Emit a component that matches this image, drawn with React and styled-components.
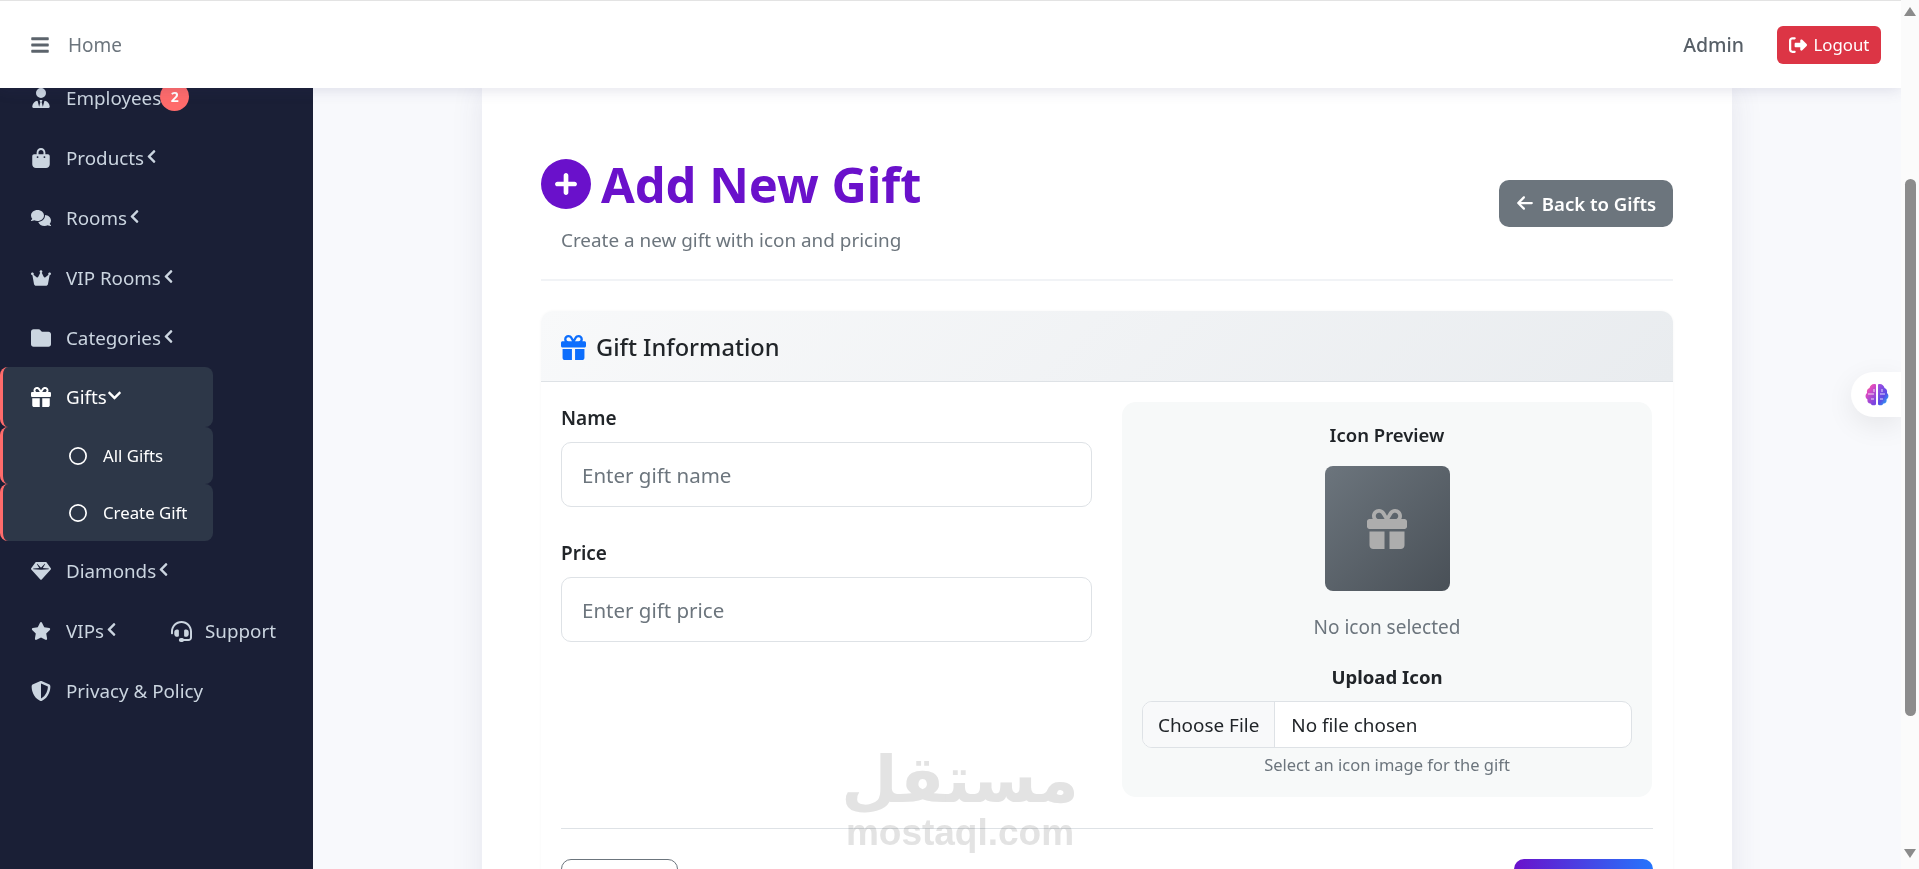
import React from "react";
import styled, { createGlobalStyle } from "styled-components";
import {
  FaUserTie, FaBagShopping, FaComments, FaCrown, FaFolder, FaGift, FaRegCircle,
  FaGem, FaStar, FaHeadset, FaShieldHalved, FaRightFromBracket,
  FaCirclePlus, FaArrowLeft,
} from "react-icons/fa6";
import { FaBars, FaChevronLeft, FaChevronDown } from "react-icons/fa";

const Global = createGlobalStyle`
  html, body { margin: 0; height: 869px; overflow: hidden; background: #f8f9fc; }
  * { box-sizing: border-box; }
  body, input, button { font-family: "Noto Sans", "Open Sans", sans-serif; }
`;

const Page = styled.div`display: flex; height: 869px; position: relative; overflow: hidden;`;
const Main = styled.div`flex: 1; min-width: 0; display: flex; flex-direction: column;`;

const Topbar = styled.header`
  height: 88px; flex: none; display: flex; align-items: center; background: #fff;
  border-top: 1px solid #e3e3e3; padding: 0 20px 0 30px;
  box-shadow: 0 2px 14px rgba(58, 59, 110, 0.14); position: relative; z-index: 3; color: #5c646c;
`;
const Home = styled.span`margin-left: 18px; font-size: 19px; color: #6c757d; flex: 1;`;
const Admin = styled.span`font-size: 19.5px; font-weight: 500; color: #575f67; margin-right: 33px;`;
const LogoutButton = styled.button`
  width: 104px; height: 38px; border: 0; border-radius: 6px; background: #dc3545; color: #fff; font-size: 16.8px;
  display: flex; align-items: center; justify-content: center; gap: 7px; padding: 0;
`;

const Body = styled.div`flex: 1; min-height: 0; display: flex; overflow: hidden;`;
const Sidebar = styled.nav`width: 313px; flex: none; background: #1a1f36; overflow: hidden; position: relative; z-index: 1;`;
const NavList = styled.div`margin-top: -20px; display: flex; flex-direction: column;`;
const NavRow = styled.div`
  width: ${p => (p.$active ? "213px" : "100%")};
  height: 60px; display: flex; align-items: center; padding-left: ${p => (p.$active ? "27px" : "30px")};
  margin-top: ${p => (p.$active ? "-1px" : "0")};
  color: ${p => (p.$active ? "#fff" : "#cbd5e0")}; font-size: 18.8px;
  background: ${p => (p.$active ? "#2d3748" : "transparent")};
  border-left: ${p => (p.$active ? "3px solid #ff6b6b" : "0")};
  border-radius: ${p => (p.$active ? "8px" : "0")};
`;
const IconSlot = styled.span`width: 21px; margin-right: 15px; display: flex; justify-content: center; font-size: 20px; flex: none;`;
const Caret = styled.span`display: flex; font-size: 15px; margin-top: -3px;`;
const Badge = styled.span`
  width: 29px; height: 29px; border-radius: 50%; background: #ff6b6b; color: #fff; font-size: 14px; font-weight: 700;
  display: flex; align-items: center; justify-content: center; margin-top: -3px; margin-left: -1px;
`;
const SubRow = styled.div`
  width: 213px; height: 57px; display: flex; align-items: center; padding-left: 66px; color: #fff; font-size: 16.8px;
  background: #2d3748; border-left: 3px solid #ff6b6b; border-radius: 8px;
  svg { font-size: 18px; margin-right: 16px; }
`;
const SupportItem = styled.span`
  display: flex; align-items: center; gap: 13px; position: absolute; left: 171px; color: #cbd5e0; font-size: 18.8px;
  svg { font-size: 21px; }
`;
const VipRow = styled(NavRow)`position: relative;`;

const Content = styled.main`flex: 1; min-width: 0; background: #f8f9fc; display: flex; justify-content: center;`;
const Card = styled.section`
  width: 1250px; height: 900px; flex: none; background: #fff; padding: 70px 59px 0;
  box-shadow: 0 0 30px rgba(58, 59, 110, 0.1);
`;
const PageHead = styled.div`
  display: flex; justify-content: space-between; align-items: center; height: 123px;
  border-bottom: 2px solid #f1f3f6; padding-bottom: 26px;
`;
const TitleBlock = styled.div`display: flex; flex-direction: column;`;
const Title = styled.h1`
  margin: 0; display: flex; align-items: center; gap: 10px; font-size: 48.8px; line-height: 50px; font-weight: 700; color: #6a11cb;
  svg { font-size: 50px; }
`;
const Subtitle = styled.p`margin: 19px 0 0 20px; font-size: 18.9px; line-height: 24px; color: #6c757d;`;
const BackButton = styled.button`
  width: 174px; height: 47px; border: 0; border-radius: 10px; background: #6c757d; color: #fff;
  font-size: 18.6px; font-weight: 600; display: flex; align-items: center; justify-content: center; gap: 8px; padding: 0; margin-top: -5px;
  svg { font-size: 18px; }
`;

const FormCard = styled.div`margin-top: 30px; border-radius: 12px; background: #fff; box-shadow: 0 0 3px rgba(0,0,0,0.04);`;
const FormHead = styled.div`
  height: 71px; display: flex; align-items: center; gap: 10px; padding: 2px 20px 0; border-radius: 12px 12px 0 0;
  background: linear-gradient(135deg, #f8f9fa, #e9ecef); border-bottom: 1px solid #dee2e6;
  font-size: 23.6px; font-weight: 500; color: #212529;
  svg { font-size: 25px; color: #0d6efd; }
`;
const FormBody = styled.div`padding: 20px 20px 0;`;
const Columns = styled.div`display: grid; grid-template-columns: 531px 530px; gap: 30px;`;
const FieldColumn = styled.div`padding-top: 4px;`;
const Field = styled.div`margin-bottom: 34px;`;
const Label = styled.label`display: block; font-size: 19px; font-weight: 600; line-height: 24px; color: #212529; margin-bottom: 12px;`;
const TextInput = styled.input`
  width: 100%; height: 65px; border: 1px solid #dee2e6; border-radius: 10px; padding: 0 20px; font-size: 20.5px; color: #212529; background: #fff;
  &::placeholder { color: #6c757d; opacity: 1; }
`;
const PreviewPanel = styled.div`
  height: 395px; background: #f7f9f9; border-radius: 14px; padding: 21px 20px 0; display: flex; flex-direction: column; align-items: center;
`;
const PreviewTitle = styled.div`font-size: 18.5px; font-weight: 600; line-height: 24px; color: #212529;`;
const PreviewBox = styled.div`
  width: 125px; height: 125px; margin-top: 19px; border-radius: 8px; background: linear-gradient(135deg, #6c757d, #495057);
  display: flex; align-items: center; justify-content: center; color: #adadad; font-size: 40px;
`;
const PreviewNote = styled.div`margin-top: 24px; font-size: 19px; line-height: 24px; color: #6c757d;`;
const UploadLabel = styled.div`margin-top: 26px; font-size: 18.6px; font-weight: 700; line-height: 24px; color: #212529;`;
const FileInput = styled.input`
  width: 100%; height: 47px; margin-top: 12px; border: 1px solid #dee2e6; border-radius: 10px; background: #fff; font-size: 18.9px; color: #212529; overflow: hidden; padding: 0; display: block;
  &::file-selector-button {
    height: 47px; margin: -1px 16px 0 0; padding: 0 15px; border: 0; border-right: 1px solid #dee2e6; background: #f8f9fa; color: #212529; font: inherit;
  }
`;
const Help = styled.div`margin-top: 6px; font-size: 16.5px; line-height: 22px; color: #6c757d;`;
const Actions = styled.div`margin-top: 31px; padding-top: 30px; border-top: 1px solid #dee2e6; display: flex; justify-content: space-between;`;
const CancelButton = styled.button`width: 117px; height: 46px; border: 1px solid #6c757d; border-radius: 10px; background: #fff; color: #6c757d; font-size: 18.6px;`;
const CreateButton = styled.button`width: 139px; height: 46px; border: 0; border-radius: 10px; background: linear-gradient(90deg, #6a11cb, #2575fc); color: #fff; font-size: 18.6px; font-weight: 600;`;

const Scrollbar = styled.div`width: 18px; flex: none; background: #fbfbfb; display: flex; flex-direction: column; align-items: center; padding: 7px 0 11px; position: relative; z-index: 4;`;
const ArrowUp = styled.div`width: 0; height: 0; border: 6px solid transparent; border-top: 0; border-bottom: 9px solid #8b8b8b;`;
const ArrowDown = styled.div`width: 0; height: 0; border: 6px solid transparent; border-bottom: 0; border-top: 9px solid #8b8b8b;`;
const ThumbTrack = styled.div`flex: 1; width: 100%; display: flex; justify-content: center; padding: 163px 0 133px;`;
const Thumb = styled.div`width: 11px; border-radius: 6px; background: #8c8c8c;`;

const BrainPill = styled.div`
  position: absolute; right: 18px; top: 372px; width: 50px; height: 45px; background: #fff; z-index: 2;
  border-radius: 23px 0 0 23px; box-shadow: 0 8px 28px rgba(0,0,0,0.08); display: flex; align-items: center; padding-left: 14px;
`;
const Watermark = styled.div`
  position: absolute; left: 846px; top: 745px; width: 228px; z-index: 2; pointer-events: none; color: #e3e3e3;
  display: flex; flex-direction: column; align-items: center; mix-blend-mode: multiply;
`;
const WatermarkArabic = styled.span`font-family: "DejaVu Sans", sans-serif; font-weight: 700; font-size: 65px; line-height: 70px; height: 70px;`;
const WatermarkLatin = styled.span`font-family: "Liberation Sans", sans-serif; font-weight: 700; font-size: 37px; line-height: 36px;`;

function Brain() {
  return (
    <svg width="24" height="23" viewBox="0 0 24 23">
      <defs>
        <linearGradient id="brainL" x1="0" y1="0" x2="0.6" y2="1">
          <stop offset="0" stopColor="#f59145" /><stop offset="0.35" stopColor="#e14bc0" /><stop offset="1" stopColor="#7d46e0" />
        </linearGradient>
        <linearGradient id="brainR" x1="0" y1="0" x2="0.7" y2="1">
          <stop offset="0" stopColor="#a64ee0" /><stop offset="0.65" stopColor="#5a4be6" /><stop offset="1" stopColor="#2aa5f5" />
        </linearGradient>
      </defs>
      <path fill="url(#brainL)" d="M11 1.5V21.5C9 23 6.5 22.5 5.5 20.5C3 20.5 2 18.5 2.5 16.5C0 15 0 11.5 2 10C1.5 7.5 2.5 5.5 4.5 5C5 2.5 8 0 11 1.5Z" />
      <path fill="url(#brainR)" d="M13 1.5V21.5C15 23 17.5 22.5 18.5 20.5C21 20.5 22 18.5 21.5 16.5C24 15 24 11.5 22 10C22.5 7.5 21.5 5.5 19.5 5C19 2.5 16 0 13 1.5Z" />
      <path stroke="#fff" strokeWidth="0.8" fill="none" d="M3 11H9M6 16H9M9 6V9M15 11H20M15 16H18M17 6V9" />
    </svg>
  );
}

const items = [
  { icon: <FaUserTie />, label: "Employees", badge: "2" },
  { icon: <FaBagShopping />, label: "Products", caret: true },
  { icon: <FaComments />, label: "Rooms", caret: true },
  { icon: <FaCrown />, label: "VIP Rooms", caret: true },
  { icon: <FaFolder />, label: "Categories", caret: true },
];

export default function App() {
  return (
    <Page>
      <Global />
      <Main>
        <Topbar>
          <FaBars size={20} />
          <Home>Home</Home>
          <Admin>Admin</Admin>
          <LogoutButton><FaRightFromBracket size={18} />Logout</LogoutButton>
        </Topbar>
        <Body>
          <Sidebar>
            <NavList>
              {items.map(i => (
                <NavRow key={i.label}>
                  <IconSlot>{i.icon}</IconSlot>
                  {i.label}
                  {i.caret && <Caret><FaChevronLeft /></Caret>}
                  {i.badge && <Badge>{i.badge}</Badge>}
                </NavRow>
              ))}
              <NavRow $active>
                <IconSlot><FaGift /></IconSlot>
                Gifts
                <Caret><FaChevronDown /></Caret>
              </NavRow>
              <SubRow><FaRegCircle />All Gifts</SubRow>
              <SubRow><FaRegCircle />Create Gift</SubRow>
              <NavRow>
                <IconSlot><FaGem /></IconSlot>
                Diamonds
                <Caret><FaChevronLeft /></Caret>
              </NavRow>
              <VipRow>
                <IconSlot><FaStar /></IconSlot>
                VIPs
                <Caret><FaChevronLeft /></Caret>
                <SupportItem><FaHeadset />Support</SupportItem>
              </VipRow>
              <NavRow>
                <IconSlot><FaShieldHalved /></IconSlot>
                Privacy &amp; Policy
              </NavRow>
            </NavList>
          </Sidebar>
          <Content>
            <Card>
              <PageHead>
                <TitleBlock>
                  <Title><FaCirclePlus />Add New Gift</Title>
                  <Subtitle>Create a new gift with icon and pricing</Subtitle>
                </TitleBlock>
                <BackButton><FaArrowLeft />Back to Gifts</BackButton>
              </PageHead>
              <FormCard>
                <FormHead><FaGift />Gift Information</FormHead>
                <FormBody>
                  <Columns>
                    <FieldColumn>
                      <Field>
                        <Label>Name</Label>
                        <TextInput placeholder="Enter gift name" />
                      </Field>
                      <Field>
                        <Label>Price</Label>
                        <TextInput placeholder="Enter gift price" />
                      </Field>
                    </FieldColumn>
                    <PreviewPanel>
                      <PreviewTitle>Icon Preview</PreviewTitle>
                      <PreviewBox><FaGift /></PreviewBox>
                      <PreviewNote>No icon selected</PreviewNote>
                      <UploadLabel>Upload Icon</UploadLabel>
                      <FileInput type="file" />
                      <Help>Select an icon image for the gift</Help>
                    </PreviewPanel>
                  </Columns>
                  <Actions>
                    <CancelButton>Cancel</CancelButton>
                    <CreateButton>Create Gift</CreateButton>
                  </Actions>
                </FormBody>
              </FormCard>
            </Card>
          </Content>
        </Body>
      </Main>
      <Scrollbar>
        <ArrowUp />
        <ThumbTrack><Thumb /></ThumbTrack>
        <ArrowDown />
      </Scrollbar>
      <BrainPill><Brain /></BrainPill>
      <Watermark>
        <WatermarkArabic>مستقل</WatermarkArabic>
        <WatermarkLatin>mostaql.com</WatermarkLatin>
      </Watermark>
    </Page>
  );
}
